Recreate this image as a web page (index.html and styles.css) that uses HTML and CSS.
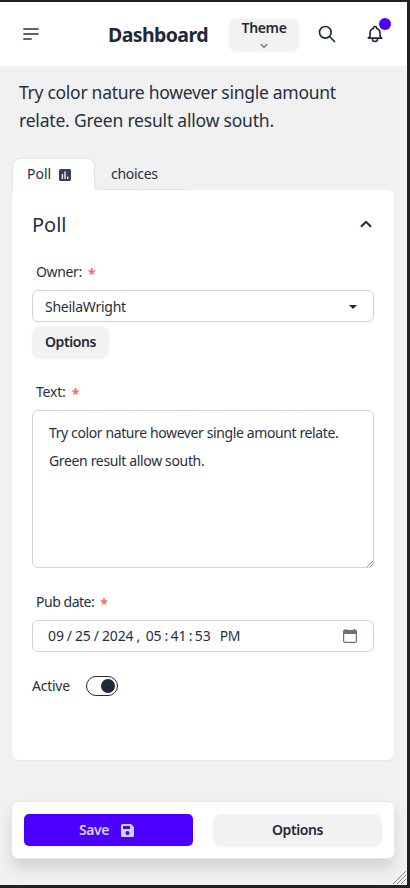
FILE: index.html
```html
<!DOCTYPE html>
<html lang="en">
<head>
<meta charset="utf-8">
<title>Dashboard</title>
<link rel="stylesheet" href="styles.css">
</head>
<body>
<div class="frame">
  <header class="navbar">
    <svg class="menu" width="16" height="13" viewBox="0 0 16 13" stroke="#5b6370" stroke-width="1.8" stroke-linecap="round"><path d="M1 1h14M1 6h14M1 11h7"/></svg>
    <h1 class="brand"><span class="t-brand">Dashboard</span></h1>
    <button class="theme"><span class="t-theme">Theme</span><svg width="8" height="6" viewBox="0 0 8 6" fill="none" stroke="#777d87" stroke-width="1.3"><path d="M.7 1 4 4.5 7.3 1"/></svg></button>
    <svg class="search" width="20" height="20" viewBox="0 0 24 24" fill="none" stroke="#1f2937" stroke-width="2" stroke-linecap="round" stroke-linejoin="round"><path d="M21 21l-6-6m2-5a7 7 0 11-14 0 7 7 0 0114 0z"/></svg>
    <div class="bell"><svg width="20" height="20" viewBox="0 0 24 24" fill="none" stroke="#1f2937" stroke-width="2" stroke-linecap="round" stroke-linejoin="round"><path d="M15 17h5l-1.405-1.405A2.032 2.032 0 0118 14.158V11a6.002 6.002 0 00-4-5.659V5a2 2 0 10-4 0v.341C7.670 6.165 6 8.388 6 11v3.159c0 .538-.214 1.055-.595 1.436L4 17h5m6 0v1a3 3 0 11-6 0v-1m6 0H9"/></svg><i class="dot"></i></div>
  </header>
  <main>
    <h2 class="title"><span class="t-title1">Try color nature however single amount</span><br><span class="t-title2">relate. Green result allow south.</span></h2>
    <nav class="tabs">
      <div class="tab active"><span class="t-tab">Poll</span><svg width="14" height="14" viewBox="0 0 14 14"><rect x="1" y="1" width="12" height="12" rx="1.5" fill="#374151"/><path d="M4.400 6v5M7 3.500v7.500M9.700 8.500v2.500" stroke="#fff" stroke-width="1.3"/></svg></div>
      <div class="tab other"><span class="t-choices">choices</span></div>
    </nav>
    <section class="card">
      <div class="card-head"><h3 class="t-poll">Poll</h3><svg width="12" height="8" viewBox="0 0 12 8" fill="none" stroke="#1f2937" stroke-width="2"><path d="M1 6.800 6 1.800 11 6.800"/></svg></div>
      <div class="label owner"><span class="t-owner">Owner:</span><b class="star">*</b></div>
      <div class="select"><span class="t-sheila">SheilaWright</span><i class="caret"></i></div>
      <button class="options"><span class="t-opt">Options</span></button>
      <div class="label text"><span class="t-text">Text:</span><b class="star">*</b></div>
      <div class="area"><span class="t-area1">Try color nature however single amount relate.</span><br><span class="t-area2">Green result allow south.</span>
        <svg class="grip" width="6" height="6" viewBox="0 0 6 6" stroke="#999"><path d="M0 6 6 0M3 6 6 3"/></svg></div>
      <div class="label pub"><span class="t-pub">Pub date:</span><b class="star">*</b></div>
      <div class="date"><span class="seg s1">09</span><span class="seg s2">/</span><span class="seg s3">25</span><span class="seg s4">/</span><span class="seg s5">2024</span><span class="seg s6">,</span><span class="seg s7">05</span><span class="seg s8">:</span><span class="seg s9">41</span><span class="seg s10">:</span><span class="seg s11">53</span><span class="seg s12">PM</span>
        <svg class="cal" width="14" height="14" viewBox="0 0 14 14"><path d="M2.500 0v2M11.500 0v2" stroke="#69717d" stroke-width="1.600"/><rect x=".6" y="1.600" width="12.800" height="11.800" rx="1.500" fill="none" stroke="#69717d" stroke-width="1.200"/><path d="M0 1.500h14V5H0z" fill="#69717d"/></svg></div>
      <div class="active-row"><span class="t-active">Active</span><i class="toggle"></i></div>
    </section>
    <div class="actions">
      <button class="save"><span class="t-save">Save</span><svg width="13" height="13" viewBox="0 0 13 13"><path fill="#d6d0ff" fill-rule="evenodd" d="M1.500 0H10l3 3v8.500a1.500 1.500 0 0 1-1.500 1.500h-10A1.500 1.500 0 0 1 0 11.500v-10A1.500 1.500 0 0 1 1.500 0zM2 2v3h7V2zM6.500 7a2 2 0 1 0 .01 0z"/></svg></button>
      <button class="more"><span class="t-opt">Options</span></button>
    </div>
  </main>
  <svg class="corner" width="13" height="13" viewBox="0 0 13 13" stroke="#888"><path d="M0 13 13 0M4 13 13 4M8 13 13 8"/></svg>
</div>
</body>
</html>
```
FILE: styles.css
```css
* { box-sizing: border-box; }
body { margin: 0; font: 14px/20px "Noto Sans", sans-serif; color: #263040; }
h1, h2, h3 { margin: 0; font-weight: 400; }
svg { display: block; flex: none; }
span { white-space: nowrap; }
button { border: 0; padding: 0; font: 600 14px/20px "Noto Sans", sans-serif; color: #1f2937; background: #f2f2f2; border-radius: 8px; box-shadow: 0 1px 2px rgba(0,0,0,.05); display: flex; align-items: center; justify-content: center; }
.frame { position: relative; width: 410px; height: 888px; border: solid #222; border-width: 2px 3px 3px 0; background: #f1f1f1; overflow: hidden; }
.navbar { height: 64px; background: #fff; display: flex; align-items: center; }
.menu { margin-left: 23px; }
.brand { margin-left: 69px; width: 100px; font-size: 19.5px; line-height: 28px; font-weight: 700; margin-top: 1px; letter-spacing: -.6px; color: #1f2937; }
.theme { margin-left: 21px; width: 70px; height: 32px; margin-top: 2px; flex-direction: column; }
.theme svg { margin-top: 8px; margin-bottom: -2px; }
.theme span { line-height: 14px; margin-top: -3px; letter-spacing: -.35px; }
.search { margin-left: 18px; }
.bell { position: relative; margin-left: 28px; }
.dot { position: absolute; left: 14px; top: -6px; width: 12px; height: 12px; border-radius: 50%; background: #4b00ff; }
main { padding: 0 13px 0 12px; }
.title { padding: 12px 0 0 7px; font-size: 17.5px; line-height: 28px; }
.t-title1 { letter-spacing: -.28px; }
.t-title2 { letter-spacing: -.2px; }
.tabs { display: flex; height: 32px; margin-top: 24px; }
.tab { display: flex; align-items: center; height: 32px; }
.active { width: 83px; background: #fff; border: 1px solid #e5e5e5; border-bottom: 0; border-radius: 8px 8px 0 0; padding: 0 0 1px 14px; }
.active svg { margin: 1px 0 0 7px; }
.other { width: 95px; padding-left: 16px; border-bottom: 1px solid #e5e5e5; border-bottom-left-radius: 8px; }
.t-choices { letter-spacing: -.3px; }
.card { height: 570px; background: #fff; border-radius: 6px; padding: 21px 20px 0; box-shadow: 0 1px 2px rgba(0,0,0,.06); }
.card-head { display: flex; align-items: center; justify-content: space-between; height: 28px; padding-right: 2px; }
.card-head svg { margin-top: -2px; }
.t-poll { font-size: 20px; line-height: 28px; }
.label { display: flex; height: 20px; padding-left: 4px; }
.star { font-weight: 600; color: #ff5861; margin-left: 6px; font-size: 14px; line-height: 23px; }
.t-owner { letter-spacing: -.35px; }
.t-text { letter-spacing: -.2px; }
.t-pub { letter-spacing: -.47px; }
.owner { margin-top: 23px; }
.select, .date, .area { border: 1px solid #d2d3d6; border-radius: 6px; background: #fff; }
.select { height: 32px; margin-top: 8px; padding: 1px 16px 0 12px; display: flex; align-items: center; justify-content: space-between; }
.t-sheila { letter-spacing: -.25px; padding-top: 1px; }
.caret { border: 4px solid transparent; border-top-color: #1f2937; border-bottom: 0; }
.options { width: 77px; height: 32px; margin-top: 4px; }
.t-opt { letter-spacing: -.4px; }
.text { margin-top: 24px; }
.area { position: relative; height: 158px; margin-top: 8px; padding: 8px 16px; line-height: 28px; }
.t-area1 { letter-spacing: -.39px; }
.t-area2 { letter-spacing: -.35px; }
.grip { position: absolute; right: 0; bottom: 0; }
.pub { margin-top: 24px; }
.date { height: 32px; margin-top: 8px; padding: 0 16px 0 15px; display: flex; align-items: center; }
.seg { letter-spacing: -.1px; }
.cal { margin: -1px 0 0 auto; }
.s2, .s3, .s4, .s5, .s6, .s8 { margin-left: 3px; }
.s7 { margin-left: 5.5px; }
.s9, .s10, .s11 { margin-left: 2.4px; }
.s12 { margin-left: 9px; }
.seg.s12 { letter-spacing: -.4px; }
.active-row { display: flex; align-items: center; margin-top: 24px; height: 20px; }
.t-active { width: 54px; letter-spacing: -.25px; }
.toggle { width: 32px; height: 20px; border: 1px solid #1f2937; border-radius: 10px; display: flex; align-items: center; justify-content: flex-end; padding-right: 2px; }
.toggle::after { content: ""; width: 14px; height: 14px; border-radius: 50%; background: #1f2937; }
.actions { margin-top: 42px; height: 56px; background: #fff; border-radius: 6px; box-shadow: 0 0 0 1px #e8e8e8, 0 10px 15px rgba(0,0,0,.13); display: flex; align-items: center; gap: 20px; padding: 0 12px; }
.actions button { flex: 1; height: 32px; }
.actions .save { background: #4b00ff; color: #d6d0ff; border-radius: 5px; }
.t-save { letter-spacing: -.4px; }
.save svg { margin: 1px 4px 0 12px; }
.corner { position: absolute; right: 1px; bottom: 1px; }
```
